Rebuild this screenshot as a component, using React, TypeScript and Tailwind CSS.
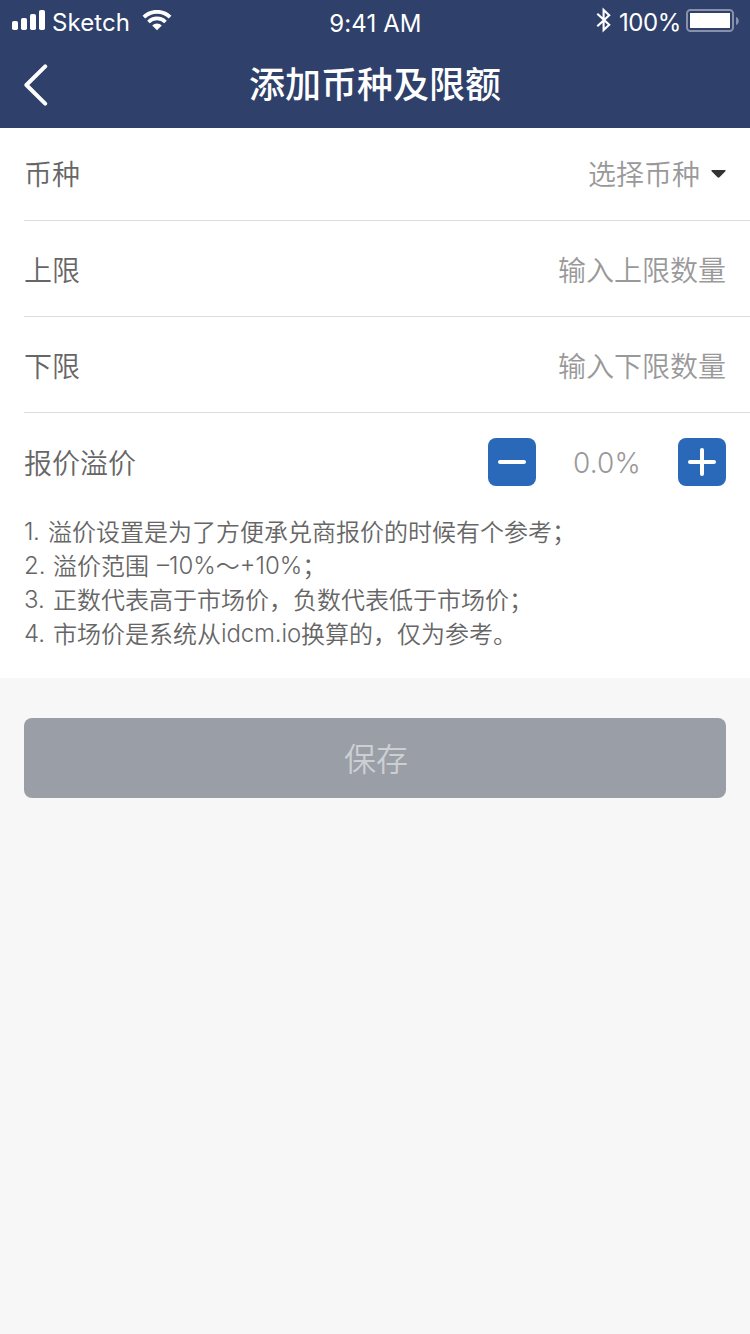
import React from "react";

function SignalIcon() {
  return (
    <svg width="34" height="20" viewBox="0 0 34 20" fill="#fff">
      <rect x="0" y="11" width="6" height="9" rx="1.8" />
      <rect x="9" y="8" width="6" height="12" rx="1.8" />
      <rect x="18" y="4" width="6" height="16" rx="1.8" />
      <rect x="27" y="0" width="6" height="20" rx="1.8" />
    </svg>
  );
}

function WifiIcon() {
  return (
    <svg width="30" height="21" viewBox="0 0 30 21" fill="none">
      <path d="M1.9 7.2 A18.5 18.5 0 0 1 28.1 7.2" stroke="#fff" strokeWidth="3.8" />
      <path d="M6.5 12 A11.8 11.8 0 0 1 23.5 12" stroke="#fff" strokeWidth="3.6" />
      <path d="M10.2 15.6 A6.7 6.7 0 0 1 19.8 15.6 L15 20.2 Z" fill="#fff" />
    </svg>
  );
}

function BluetoothIcon() {
  return (
    <svg width="16" height="26" viewBox="0 0 16 26" fill="none" stroke="#fff" strokeWidth="2.1">
      <path d="M1.3 6.8 L13.2 17.8 L7.6 23 V3 L13.2 8.2 L1.3 19.2" />
    </svg>
  );
}

function BatteryIcon() {
  return (
    <svg width="54" height="24" viewBox="0 0 54 24" fill="none">
      <rect x="1" y="1" width="46" height="21" rx="3.5" stroke="#8791ab" strokeWidth="2" />
      <rect x="4" y="4" width="40" height="15" fill="#fff" />
      <path d="M50 8 C53.7 9 53.7 15 50 16 Z" fill="#8791ab" />
    </svg>
  );
}

function StatusBar() {
  return (
    <div className="grid h-10 grid-cols-3 pl-3 pr-[10px] font-['Inter','Liberation_Sans',sans-serif] text-[24px] font-normal leading-[30px] text-white">
      <div className="flex items-start">
        <div className="pt-[10px]"><SignalIcon /></div>
        <span className="ml-[6px] mt-[8px] w-[78px] tracking-[0.1px]">Sketch</span>
        <div className="ml-[12px] pt-[10px]"><WifiIcon /></div>
      </div>
      <div className="pr-px pt-[9px] text-center tracking-[0.1px]">9:41 AM</div>
      <div className="flex items-start justify-end">
        <div className="pt-[7px]"><BluetoothIcon /></div>
        <span className="ml-[7px] mt-[8px] w-[61px] tracking-[-0.4px]">100%</span>
        <div className="ml-[6px] pt-[9px]"><BatteryIcon /></div>
      </div>
    </div>
  );
}

function NavBar() {
  return (
    <div className="grid h-22 grid-cols-[100px_1fr_100px] items-center">
      <button className="pl-[22px]" aria-label="返回">
        <svg className="block" width="28" height="44" viewBox="0 0 28 44" fill="none" stroke="#fff" strokeWidth="4" strokeLinecap="round" strokeLinejoin="round">
          <path d="M23.2 4.4 L4.4 23 L23.2 41.6" />
        </svg>
      </button>
      <h1 className="pb-[5px] text-center text-4xl font-medium text-white">添加币种及限额</h1>
    </div>
  );
}

function Field({ label, children, className = "" }: { label: string; children: React.ReactNode; className?: string }) {
  return (
    <div className={`flex items-center justify-between pr-6 text-[28px] leading-10 ${className}`}>
      <span className="text-[#666666]">{label}</span>
      {children}
    </div>
  );
}

function StepButton({ plus = false }: { plus?: boolean }) {
  return (
    <button className="flex size-12 items-center justify-center rounded-[8px] bg-[#2a69b9]" aria-label={plus ? "增加" : "减少"}>
      <svg width="28" height="28" viewBox="0 0 28 28" stroke="#fff" strokeWidth="4" strokeLinecap="round">
        <path d="M2 14 H26" />
        {plus && <path d="M14 2 V26" />}
      </svg>
    </button>
  );
}

function Latin({ children, className = "" }: { children: React.ReactNode; className?: string }) {
  return <span className={`font-['Inter','Liberation_Sans',sans-serif] ${className}`}>{children}</span>;
}

export default function App() {
  return (
    <div className="flex min-h-[1334px] w-[750px] flex-col bg-[#f7f7f7] font-['Noto_Sans_CJK_SC',sans-serif] font-[350]">
      <header className="h-32 bg-[#2f406b]">
        <StatusBar />
        <NavBar />
      </header>

      <section className="h-[550px] bg-white pl-6">
        <Field label="币种" className="h-[93px] border-b border-[#dddddd] pb-[2px]">
          <div className="flex items-center text-[#999999]">
            选择币种
            <svg className="ml-[11px] mt-px" width="15" height="8" viewBox="0 0 15 8" fill="#333333">
              <path d="M0.8 0 H14.2 Q15 0.6 14.2 1.4 L8.5 7.3 Q7.5 8.2 6.5 7.3 L0.8 1.4 Q0 0.6 0.8 0 Z" />
            </svg>
          </div>
        </Field>
        <Field label="上限" className="h-24 border-b border-[#dddddd]">
          <span className="text-[#999999]">输入上限数量</span>
        </Field>
        <Field label="下限" className="h-24 border-b border-[#dddddd]">
          <span className="text-[#999999]">输入下限数量</span>
        </Field>
        <Field label="报价溢价" className="h-[98px]">
          <div className="flex w-[238px] items-center justify-between">
            <StepButton />
            <Latin className="pt-px font-light tracking-[0.2px] text-[#999999]">0.0%</Latin>
            <StepButton plus />
          </div>
        </Field>
        <ol className="mt-[3px] text-2xl leading-[34px] text-[#666666]">
          <li className="flex h-[34px]"><Latin className="w-6 pt-px font-[350] tracking-[-0.5px]">1.</Latin>溢价设置是为了方便承兑商报价的时候有个参考；</li>
          <li className="flex h-[34px]"><Latin className="w-[29px] pt-px font-[350]">2.</Latin>溢价范围<Latin className="ml-2 pt-px font-[350]">–10%</Latin>～<Latin className="pt-px font-[350]">+10%</Latin>；</li>
          <li className="flex h-[34px]"><Latin className="w-[29px] pt-px font-[350]">3.</Latin>正数代表高于市场价，负数代表低于市场价；</li>
          <li className="flex h-[34px]"><Latin className="w-[29px] pt-px font-[350]">4.</Latin>市场价是系统从<Latin className="pt-px font-[350] tracking-[-0.15px]">idcm.io</Latin>换算的，仅为参考。</li>
        </ol>
      </section>

      <div className="px-6 pt-10">
        <button className="h-20 w-full rounded-[8px] bg-[#9a9ea6] pb-[2px] pl-[2px] text-[32px] text-[#cccfd3]">保存</button>
      </div>
    </div>
  );
}
